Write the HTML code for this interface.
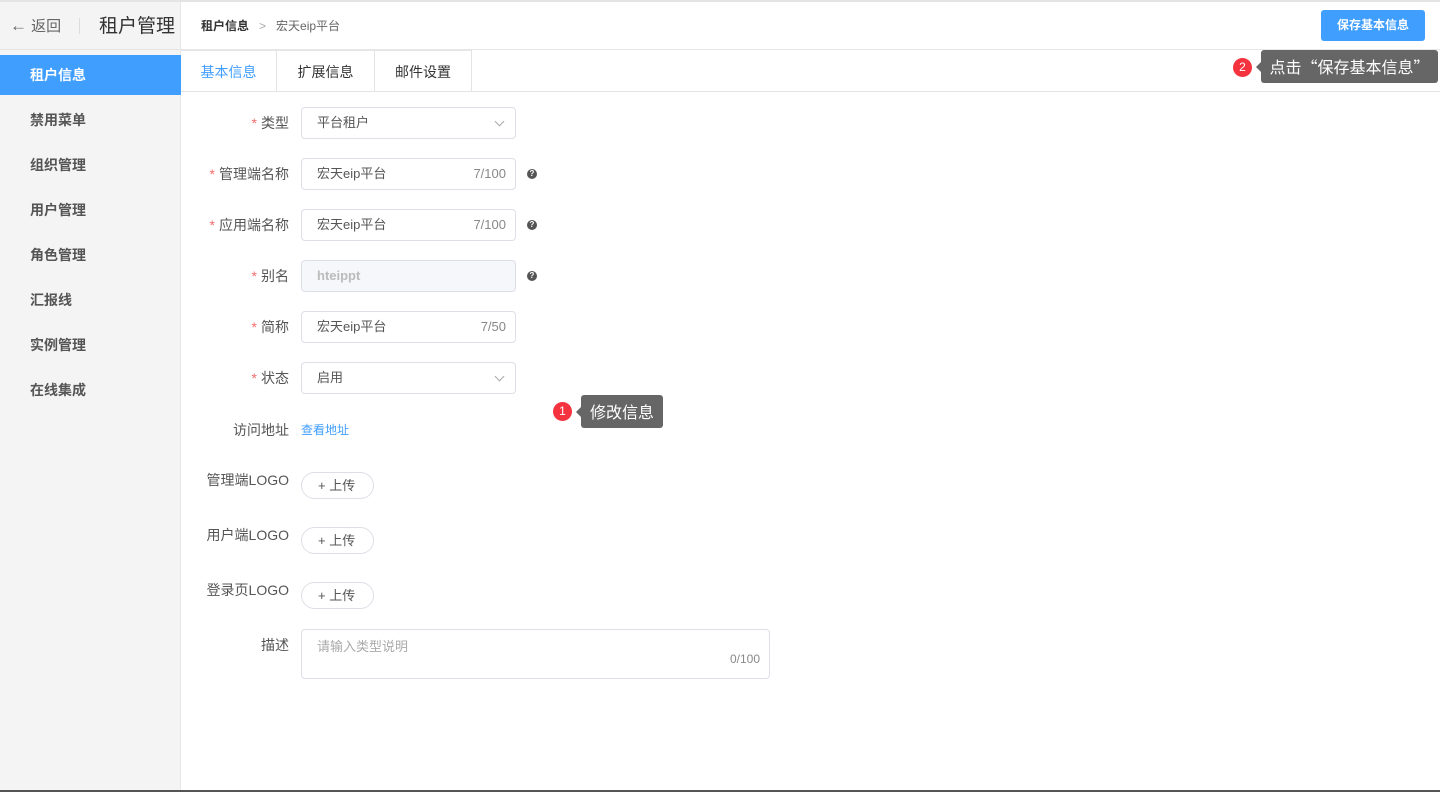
<!DOCTYPE html>
<html><head><meta charset="utf-8"><style>
*{box-sizing:border-box;margin:0;padding:0}
body{width:1440px;height:792px;position:relative;overflow:hidden;background:#fff;font-family:"Liberation Sans","Noto Sans CJK SC",sans-serif;font-size:14px;color:#333}
.a{position:absolute}
#top{left:0;top:0;width:1440px;height:2px;background:#e4e4e4}
#side{left:0;top:2px;width:181px;height:790px;background:#f4f4f4;border-right:1px solid #e8e8e8}
#sh{left:0;top:2px;width:181px;height:48px;border-bottom:1px solid #e4e4e4}
.mi{left:30px;font-size:14px;font-weight:bold;color:#555;line-height:20px}
#act{left:0;top:55px;width:181px;height:40px;background:#409eff}
.lbl{right:1151px;text-align:right;color:#555;font-size:14px;line-height:20px}
.st{color:#f56c6c;margin-right:4px}
.inp{left:301px;width:215px;height:32px;border:1px solid #dcdfe6;border-radius:4px;padding-left:15px;line-height:30px;font-size:13px;color:#555}
.cnt{position:absolute;right:9px;top:0;color:#888;font-size:13px}
.q{left:527px;width:10px;height:10px;border-radius:50%;background:#555;color:#fff;font-size:8px;line-height:10px;text-align:center;font-weight:bold}
.arr{position:absolute;right:12px;top:10px;width:7px;height:7px;border-right:1px solid #aaa;border-bottom:1px solid #aaa;transform:rotate(45deg)}
.up{left:301px;width:73px;height:27px;border:1px solid #dcdfe6;border-radius:14px;font-size:13px;line-height:25px;padding-left:16px;color:#555}
.tab{top:50px;height:42px;border-right:1px solid #e4e4e4;line-height:42px;text-align:center;font-size:14px}
.tip{background:#666;color:#fff;border-radius:3px;font-size:16px;padding:0 6px;line-height:33px;height:33px;font-family:"Noto Sans CJK SC",sans-serif;text-align:center}
.tip:before{content:"";position:absolute;left:-5px;top:12px;border-top:5px solid transparent;border-bottom:5px solid transparent;border-right:5px solid #666}
.bd{width:19px;height:19px;border-radius:50%;background:#f5333f;color:#fff;font-size:12px;text-align:center;line-height:19px}
</style></head><body>
<div class="a" id="side"></div>
<div class="a" id="sh"></div>
<div class="a" id="top"></div>
<div class="a" style="left:10px;top:16px;font-size:15px;color:#666;line-height:20px"><span style="font-size:17px">←</span> 返回</div>
<div class="a" style="left:79px;top:18px;width:1px;height:16px;background:#ddd"></div>
<div class="a" style="left:99px;top:15px;font-size:19px;color:#333;line-height:24px">租户管理</div>
<div class="a" id="act"></div>
<div class="a mi" style="top:65px;color:#fff">租户信息</div>
<div class="a mi" style="top:110px">禁用菜单</div>
<div class="a mi" style="top:155px">组织管理</div>
<div class="a mi" style="top:200px">用户管理</div>
<div class="a mi" style="top:245px">角色管理</div>
<div class="a mi" style="top:290px">汇报线</div>
<div class="a mi" style="top:335px">实例管理</div>
<div class="a mi" style="top:380px">在线集成</div>

<div class="a" style="left:181px;top:49px;width:1259px;height:1px;background:#e8e8e8"></div>
<div class="a" style="left:201px;top:17px;font-size:12px;line-height:18px"><b style="color:#333">租户信息</b><span style="color:#aaa;margin:0 10px">&gt;</span><span style="color:#666">宏天eip平台</span></div>
<div class="a" style="left:1321px;top:10px;width:104px;height:31px;background:#409eff;border-radius:3px;color:#fff;font-size:12px;font-weight:bold;text-align:center;line-height:31px">保存基本信息</div>

<div class="a" style="left:181px;top:91px;width:1259px;height:1px;background:#e4e4e4"></div>
<div class="a tab" style="left:181px;width:96px;color:#409eff;border-top:1px solid #e4e4e4">基本信息</div>
<div class="a tab" style="left:277px;width:98px;border-top:1px solid #e4e4e4">扩展信息</div>
<div class="a tab" style="left:375px;width:97px;border-top:1px solid #e4e4e4">邮件设置</div>

<div class="a bd" style="left:1233px;top:58px">2</div>
<div class="a tip" style="left:1261px;top:50px;width:177px;padding:0">点击“保存基本信息”</div>

<div class="a lbl" style="top:113px"><span class="st">*</span>类型</div>
<div class="a inp" style="top:107px">平台租户<i class="arr"></i></div>
<div class="a lbl" style="top:164px"><span class="st">*</span>管理端名称</div>
<div class="a inp" style="top:158px">宏天eip平台<span class="cnt">7/100</span></div>
<div class="a q" style="top:169px">?</div>
<div class="a lbl" style="top:215px"><span class="st">*</span>应用端名称</div>
<div class="a inp" style="top:209px">宏天eip平台<span class="cnt">7/100</span></div>
<div class="a q" style="top:220px">?</div>
<div class="a lbl" style="top:266px"><span class="st">*</span>别名</div>
<div class="a inp" style="top:260px;background:#f5f7fa;color:#bbb;font-weight:bold">hteippt</div>
<div class="a q" style="top:271px">?</div>
<div class="a lbl" style="top:317px"><span class="st">*</span>简称</div>
<div class="a inp" style="top:311px">宏天eip平台<span class="cnt">7/50</span></div>
<div class="a lbl" style="top:368px"><span class="st">*</span>状态</div>
<div class="a inp" style="top:362px">启用<i class="arr"></i></div>

<div class="a bd" style="left:553px;top:402px">1</div>
<div class="a tip" style="left:581px;top:395px;width:82px;padding:0">修改信息</div>

<div class="a lbl" style="top:420px">访问地址</div>
<div class="a" style="left:301px;top:421px;font-size:12px;color:#409eff;line-height:18px">查看地址</div>
<div class="a lbl" style="top:470px">管理端LOGO</div>
<div class="a up" style="top:472px">+ 上传</div>
<div class="a lbl" style="top:525px">用户端LOGO</div>
<div class="a up" style="top:527px">+ 上传</div>
<div class="a lbl" style="top:580px">登录页LOGO</div>
<div class="a up" style="top:582px">+ 上传</div>
<div class="a lbl" style="top:635px">描述</div>
<div class="a" style="left:301px;top:629px;width:469px;height:50px;border:1px solid #dcdfe6;border-radius:4px;padding:6px 15px;font-size:13px;color:#aaa">请输入类型说明<span style="position:absolute;right:9px;bottom:12px;color:#888;font-size:12px">0/100</span></div>
<div class="a" style="left:0;top:790px;width:1440px;height:2px;background:#555"></div>
</body></html>
